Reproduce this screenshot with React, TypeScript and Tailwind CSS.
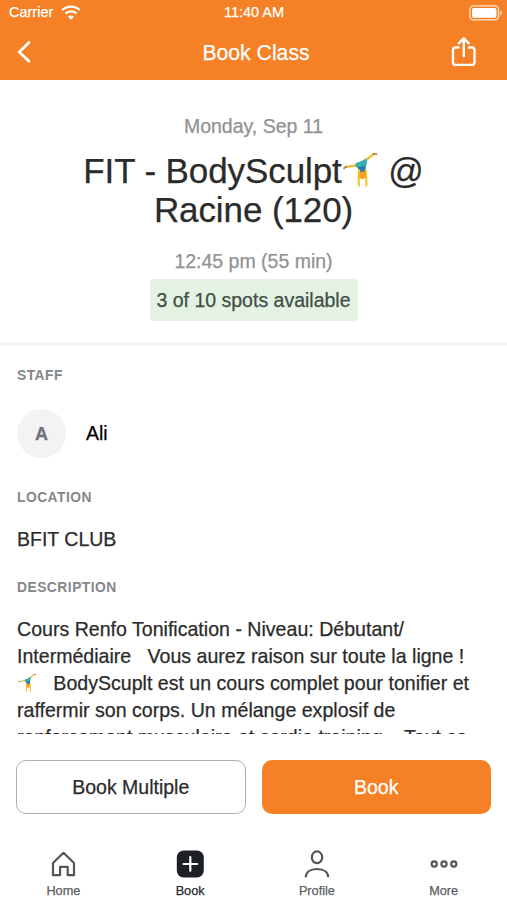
import React from "react";

const Gymnast: React.FC<{ className: string }> = ({ className }) => (
  <svg viewBox="0 0 36 38" fill="none" className={className}>
    <path
      d="M14.5 14.3 4 15.8M22 10.5 32 2.8"
      stroke="#f5b82e"
      strokeWidth="2.3"
      strokeLinecap="round"
    />
    <path
      d="m4 15.8-2 1.4M31.5 2.800l3 .4"
      stroke="#a5843f"
      strokeWidth="1.8"
      strokeLinecap="round"
    />
    <path d="m13.500 12.300 5.500-2 5.300-2.800 1 3.400-1.800 6-7.200.7-2.800-2Z" fill="#39adb0" />
    <path d="m16 16 7.500-.8.500 7.300h-7.500Z" fill="#2878b4" />
    <path
      d="m17 19.500-.4 7.500.4 7.500M23.800 19.500l.4 7.500.2 7.500"
      stroke="#fac73a"
      strokeWidth="2.300"
      strokeLinecap="round"
      strokeLinejoin="round"
    />
    <circle cx="20.400" cy="24.300" r="3.700" fill="#f3a71e" />
  </svg>
);

const StatusBar: React.FC = () => (
  <div className="grid h-6 grid-cols-3 items-center pl-[9px] pr-1 text-[14.5px] leading-6">
    <div className="flex items-center gap-2">
      <span>Carrier</span>
      <svg
        viewBox="0 0 20 15"
        fill="none"
        stroke="currentColor"
        className="h-[15px] w-5"
      >
        <path d="M1.2 5.2C6.2.5 13.8.5 18.8 5.2" strokeWidth="2.3" />
        <path d="M4.5 8.6c3.2-2.9 7.8-2.9 11 0" strokeWidth="2.3" />
        <path d="m10 14.800-3.200-3.200c1.800-1.500 4.600-1.500 6.400 0Z" fill="currentColor" stroke="none" />
      </svg>
    </div>
    <span className="-ml-[4px] whitespace-nowrap text-center">11:40 AM</span>
    <svg viewBox="0 0 34 16" fill="none" className="mt-px h-4 w-[34px] justify-self-end">
      <rect x=".9" y=".9" width="28.6" height="14" rx="3.6" stroke="#ffe6d2" strokeWidth="1.3" />
      <rect x="3" y="3" width="24.4" height="9.8" rx="1.8" fill="#fff" />
      <path d="M31.3 5.3c2 .8 2 4.6 0 5.4Z" fill="#ffe6d2" />
    </svg>
  </div>
);

const Header: React.FC = () => (
  <header className="h-20 shrink-0 bg-[#f58025] text-white">
    <StatusBar />
    <div className="grid h-14 grid-cols-[1fr_auto_1fr] items-center pl-4 pr-[30px]">
      <button aria-label="Back">
        <svg viewBox="0 0 16 24" fill="none" className="h-6 w-4">
          <path
            d="M13 2.5 3.2 12l9.8 9.3"
            stroke="currentColor"
            strokeWidth="2.8"
            strokeLinecap="round"
            strokeLinejoin="round"
          />
        </svg>
      </button>
      <h1 className="pl-[19px] pt-px text-[21.2px]">Book Class</h1>
      <button aria-label="Share" className="justify-self-end">
        <svg
          viewBox="0 0 26 32"
          fill="none"
          stroke="currentColor"
          strokeWidth="2.4"
          strokeLinecap="round"
          strokeLinejoin="round"
          className="h-8 w-[26px]"
        >
          <path d="M7.5 11.5H4.7c-1.7 0-2.7 1-2.7 2.7v12c0 1.7 1 2.7 2.7 2.7h16.1c1.7 0 2.7-1 2.7-2.7v-12c0-1.7-1-2.7-2.7-2.7H18" />
          <path d="M12.8 20V2.5M7.8 7.3l5-4.9 5 4.9" />
        </svg>
      </button>
    </div>
  </header>
);

const SectionTitle: React.FC<{ children: string }> = ({ children }) => (
  <h3 className="text-[13.8px] font-bold leading-4 tracking-[0.5px] text-[#85878a] [-webkit-text-stroke:0]">
    {children}
  </h3>
);

const tabs = [
  {
    label: "Home",
    icon: (
      <path
        d="M4 13 14.5 2.8 25 13v12.2h-6.300v-8.400h-7.600v8.400H4Z"
        strokeLinejoin="round"
      />
    ),
  },
  {
    label: "Book",
    active: true,
    icon: (
      <>
        <rect x=".8" y=".5" width="27" height="27" rx="7" fill="#1c1f24" stroke="none" />
        <path d="M14.3 7.2v13.6M7.5 14h13.6" stroke="#fff" strokeLinecap="round" />
      </>
    ),
  },
  {
    label: "Profile",
    icon: (
      <>
        <ellipse cx="14" cy="7.3" rx="5.2" ry="5.9" />
        <path d="M2.8 27.3c0-5 4-8.3 11.2-8.3s11.2 3.3 11.2 8.3" />
      </>
    ),
  },
  {
    label: "More",
    icon: (
      <>
        <circle cx="4.200" cy="14" r="2.600" />
        <circle cx="14" cy="14" r="2.600" />
        <circle cx="23.800" cy="14" r="2.600" />
      </>
    ),
  },
];

const TabBar: React.FC = () => (
  <nav className="grid h-[70px] grid-cols-4 pt-[4px]">
    {tabs.map((tab) => (
      <button key={tab.label} className="flex flex-col items-center">
        <svg
          viewBox="0 0 28 28"
          fill="none"
          stroke="#53565b"
          strokeWidth="2.2"
          className="h-7 w-7"
        >
          {tab.icon}
        </svg>
        <span
          className={
            tab.active
              ? "mt-[5px] text-[12.7px] leading-4 text-[#25282c]"
              : "mt-[5px] text-[12.7px] leading-4 text-[#5a5d62]"
          }
        >
          {tab.label}
        </span>
      </button>
    ))}
  </nav>
);

const App: React.FC = () => {
  return (
    <div className="flex h-[900px] w-[507px] flex-col overflow-hidden bg-white font-['Liberation_Sans',Arial,sans-serif] text-[#2b2b2b] [-webkit-text-stroke:0.25px]">
      <Header />

      <section className="flex h-[266px] shrink-0 flex-col items-center border-b-4 border-[#f6f6f7] pt-[34px]">
        <p className="text-[19.5px] leading-6 text-[#929292]">Monday, Sep 11</p>
        <h2 className="mt-[13px] text-center text-[35px] leading-[39px] tracking-[-0.1px]">
          <span className="flex items-center whitespace-pre">
            FIT - BodySculpt
            <Gymnast className="-mt-px mr-px h-[38px] w-9" />
            {" @"}
          </span>
          <span className="block">Racine (120)</span>
        </h2>
        <p className="mt-5 text-[19.5px] leading-6 text-[#929292]">
          12:45 pm (55 min)
        </p>
        <span className="mt-[6px] flex h-[42px] w-[208px] items-center justify-center whitespace-nowrap rounded bg-[#e4f2e4] pt-px text-[19.5px] text-[#414e45]">
          3 of 10 spots available
        </span>
      </section>

      <main className="flex h-[388px] shrink-0 flex-col overflow-hidden px-[17px] pt-[22px]">
        <SectionTitle>STAFF</SectionTitle>
        <div className="mt-[25px] flex items-center gap-5">
          <div className="flex h-[49px] w-[49px] items-center justify-center rounded-full bg-[#f1f3f5] text-lg font-bold text-[#707276]">
            A
          </div>
          <span className="text-[19.5px] text-black">Ali</span>
        </div>

        <div className="mt-8">
          <SectionTitle>LOCATION</SectionTitle>
        </div>
        <p className="mt-5 text-[19.5px] leading-[27px]">BFIT CLUB</p>

        <div className="mt-[27px]">
          <SectionTitle>DESCRIPTION</SectionTitle>
        </div>
        <div className="mt-5 whitespace-pre text-[19.58px] leading-[27px]">
          <p>Cours Renfo Tonification - Niveau: Débutant/</p>
          <p>{"Intermédiaire   Vous aurez raison sur toute la ligne !"}</p>
          <p className="flex items-center">
            <Gymnast className="-mt-0.5 h-5 w-5" />
            {"   BodyScuplt est un cours complet pour tonifier et"}
          </p>
          <p>raffermir son corps. Un mélange explosif de</p>
          <p>{"renforcement musculaire et cardio training.   Tout ce"}</p>
        </div>
      </main>

      <footer className="flex grow flex-col justify-between pt-[26px]">
        <div className="grid grid-cols-2 gap-4 px-4 text-[19.5px]">
          <button className="h-[54px] rounded-[10px] border border-[#aeb0b2] pt-0.5">
            Book Multiple
          </button>
          <button className="h-[54px] rounded-[10px] bg-[#f58025] pt-0.5 text-white">
            Book
          </button>
        </div>
        <div className="-mb-[16px]">
          <TabBar />
        </div>
      </footer>
    </div>
  );
};

export default App;
